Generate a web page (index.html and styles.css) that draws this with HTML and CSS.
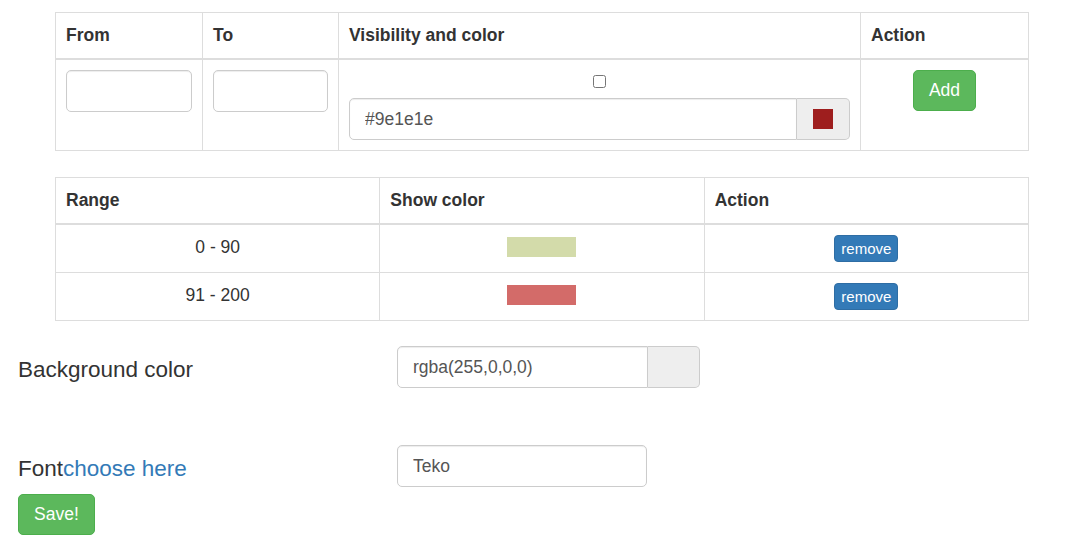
FILE: index.html
```html
<!DOCTYPE html>
<html>
<head>
<meta charset="utf-8">
<link rel="stylesheet" href="styles.css">
</head>
<body>
<div class="tables">
  <table class="tbl tbl-add">
    <colgroup>
      <col class="c-from"><col class="c-to"><col class="c-vis"><col class="c-act">
    </colgroup>
    <thead>
      <tr><th>From</th><th>To</th><th>Visibility and color</th><th>Action</th></tr>
    </thead>
    <tbody>
      <tr>
        <td><input class="form-control" type="text"></td>
        <td><input class="form-control" type="text"></td>
        <td>
          <div class="check"><input type="checkbox"></div>
          <div class="input-group">
            <input class="form-control" type="text" value="#9e1e1e">
            <span class="addon"><i class="swatch-sm"></i></span>
          </div>
        </td>
        <td class="center"><button class="btn btn-success">Add</button></td>
      </tr>
    </tbody>
  </table>

  <table class="tbl tbl-list">
    <colgroup>
      <col class="c-third"><col class="c-third"><col class="c-third">
    </colgroup>
    <thead>
      <tr><th>Range</th><th>Show color</th><th>Action</th></tr>
    </thead>
    <tbody>
      <tr>
        <td class="center">0 - 90</td>
        <td class="center"><span class="swatch swatch-green"></span></td>
        <td class="center"><button class="btn btn-primary btn-xs">remove</button></td>
      </tr>
      <tr>
        <td class="center">91 - 200</td>
        <td class="center"><span class="swatch swatch-red"></span></td>
        <td class="center"><button class="btn btn-primary btn-xs">remove</button></td>
      </tr>
    </tbody>
  </table>
</div>

<div class="settings">
  <div class="form-row row-bg">
    <label class="lbl">Background color</label>
    <div class="input-group w-bg">
      <input class="form-control" type="text" value="rgba(255,0,0,0)">
      <span class="addon addon-empty"></span>
    </div>
  </div>
  <div class="form-row row-font">
    <label class="lbl">Font<a href="#" class="link">choose here</a></label>
    <div class="w-font">
      <input class="form-control" type="text" value="Teko">
    </div>
  </div>
  <button class="btn btn-success btn-save">Save!</button>
</div>
</body>
</html>
```

FILE: styles.css
```css
* { box-sizing: border-box; }
html, body { margin: 0; padding: 0; background: #fff; }
body {
  font-family: "Liberation Sans", Arial, sans-serif;
  font-size: 17.5px;
  line-height: 25px;
  color: #333;
  width: 1067px;
  height: 540px;
  overflow: hidden;
}
.tables { padding: 12px 38px 0 55px; }

.tbl {
  width: 973px;
  border-collapse: collapse;
  table-layout: fixed;
}
.tbl-add { margin-bottom: 26px; }
.tbl-list { width: 974px; margin-bottom: 25px; }
.tbl th, .tbl td {
  border: 1px solid #ddd;
  padding: 10px;
  line-height: 25px;
}
.tbl th {
  text-align: left;
  vertical-align: bottom;
  font-weight: bold;
  border-bottom: 2px solid #ddd;
}
.tbl td { vertical-align: top; }
.tbl td.center { text-align: center; }

.c-from { width: 147px; }
.c-to { width: 136px; }
.c-vis { width: 522px; }
.c-act { width: 168px; }
.c-third { width: 33.33%; }

.form-control {
  display: block;
  width: 100%;
  height: 42px;
  padding: 7px 15px;
  font-family: inherit;
  font-size: 17.5px;
  line-height: 25px;
  color: #555;
  background: #fff;
  border: 1px solid #ccc;
  border-radius: 5px;
  box-shadow: inset 0 1px 1px rgba(0,0,0,.075);
  margin: 0;
}

.check { height: 28px; text-align: center; }
.check input {
  width: 13px;
  height: 13px;
  margin: 5px 0 0;
  vertical-align: top;
}

.input-group { display: flex; }
.input-group .form-control {
  flex: 1;
  border-radius: 5px 0 0 5px;
}
.addon {
  display: flex;
  align-items: center;
  justify-content: center;
  width: 53px;
  height: 42px;
  background: #eee;
  border: 1px solid #ccc;
  border-left: 0;
  border-radius: 0 5px 5px 0;
}
.addon-empty { width: 52px; }
.swatch-sm {
  display: block;
  width: 20px;
  height: 20px;
  background: #9e1e1e;
}

.btn {
  display: inline-block;
  font-family: inherit;
  font-size: 17.5px;
  line-height: 25px;
  padding: 7px 15px;
  border: 1px solid transparent;
  border-radius: 5px;
  color: #fff;
  cursor: pointer;
  margin: 0;
}
.btn-success { background: #5cb85c; border-color: #4cae4c; }
.btn-primary { background: #337ab7; border-color: #2e6da4; }
.btn-xs {
  font-size: 15px;
  line-height: 23px;
  padding: 1px 6px;
  border-radius: 4px;
  vertical-align: top;
}

.swatch {
  display: inline-block;
  width: 69px;
  height: 20px;
  margin-top: 2px;
  vertical-align: top;
}
.swatch-green { background: #d3dbaa; }
.swatch-red { background: #d36b69; }

.settings { padding: 0 0 0 18px; }
.form-row { display: flex; align-items: center; }
.row-font { margin-top: 57px; }
.lbl {
  width: 379px;
  font-size: 22.5px;
  line-height: 30px;
  padding-top: 6px;
}
.link { color: #337ab7; text-decoration: none; }
.w-bg { width: 303px; }
.w-font { width: 250px; }
.btn-save { margin-top: 7px; }
```
